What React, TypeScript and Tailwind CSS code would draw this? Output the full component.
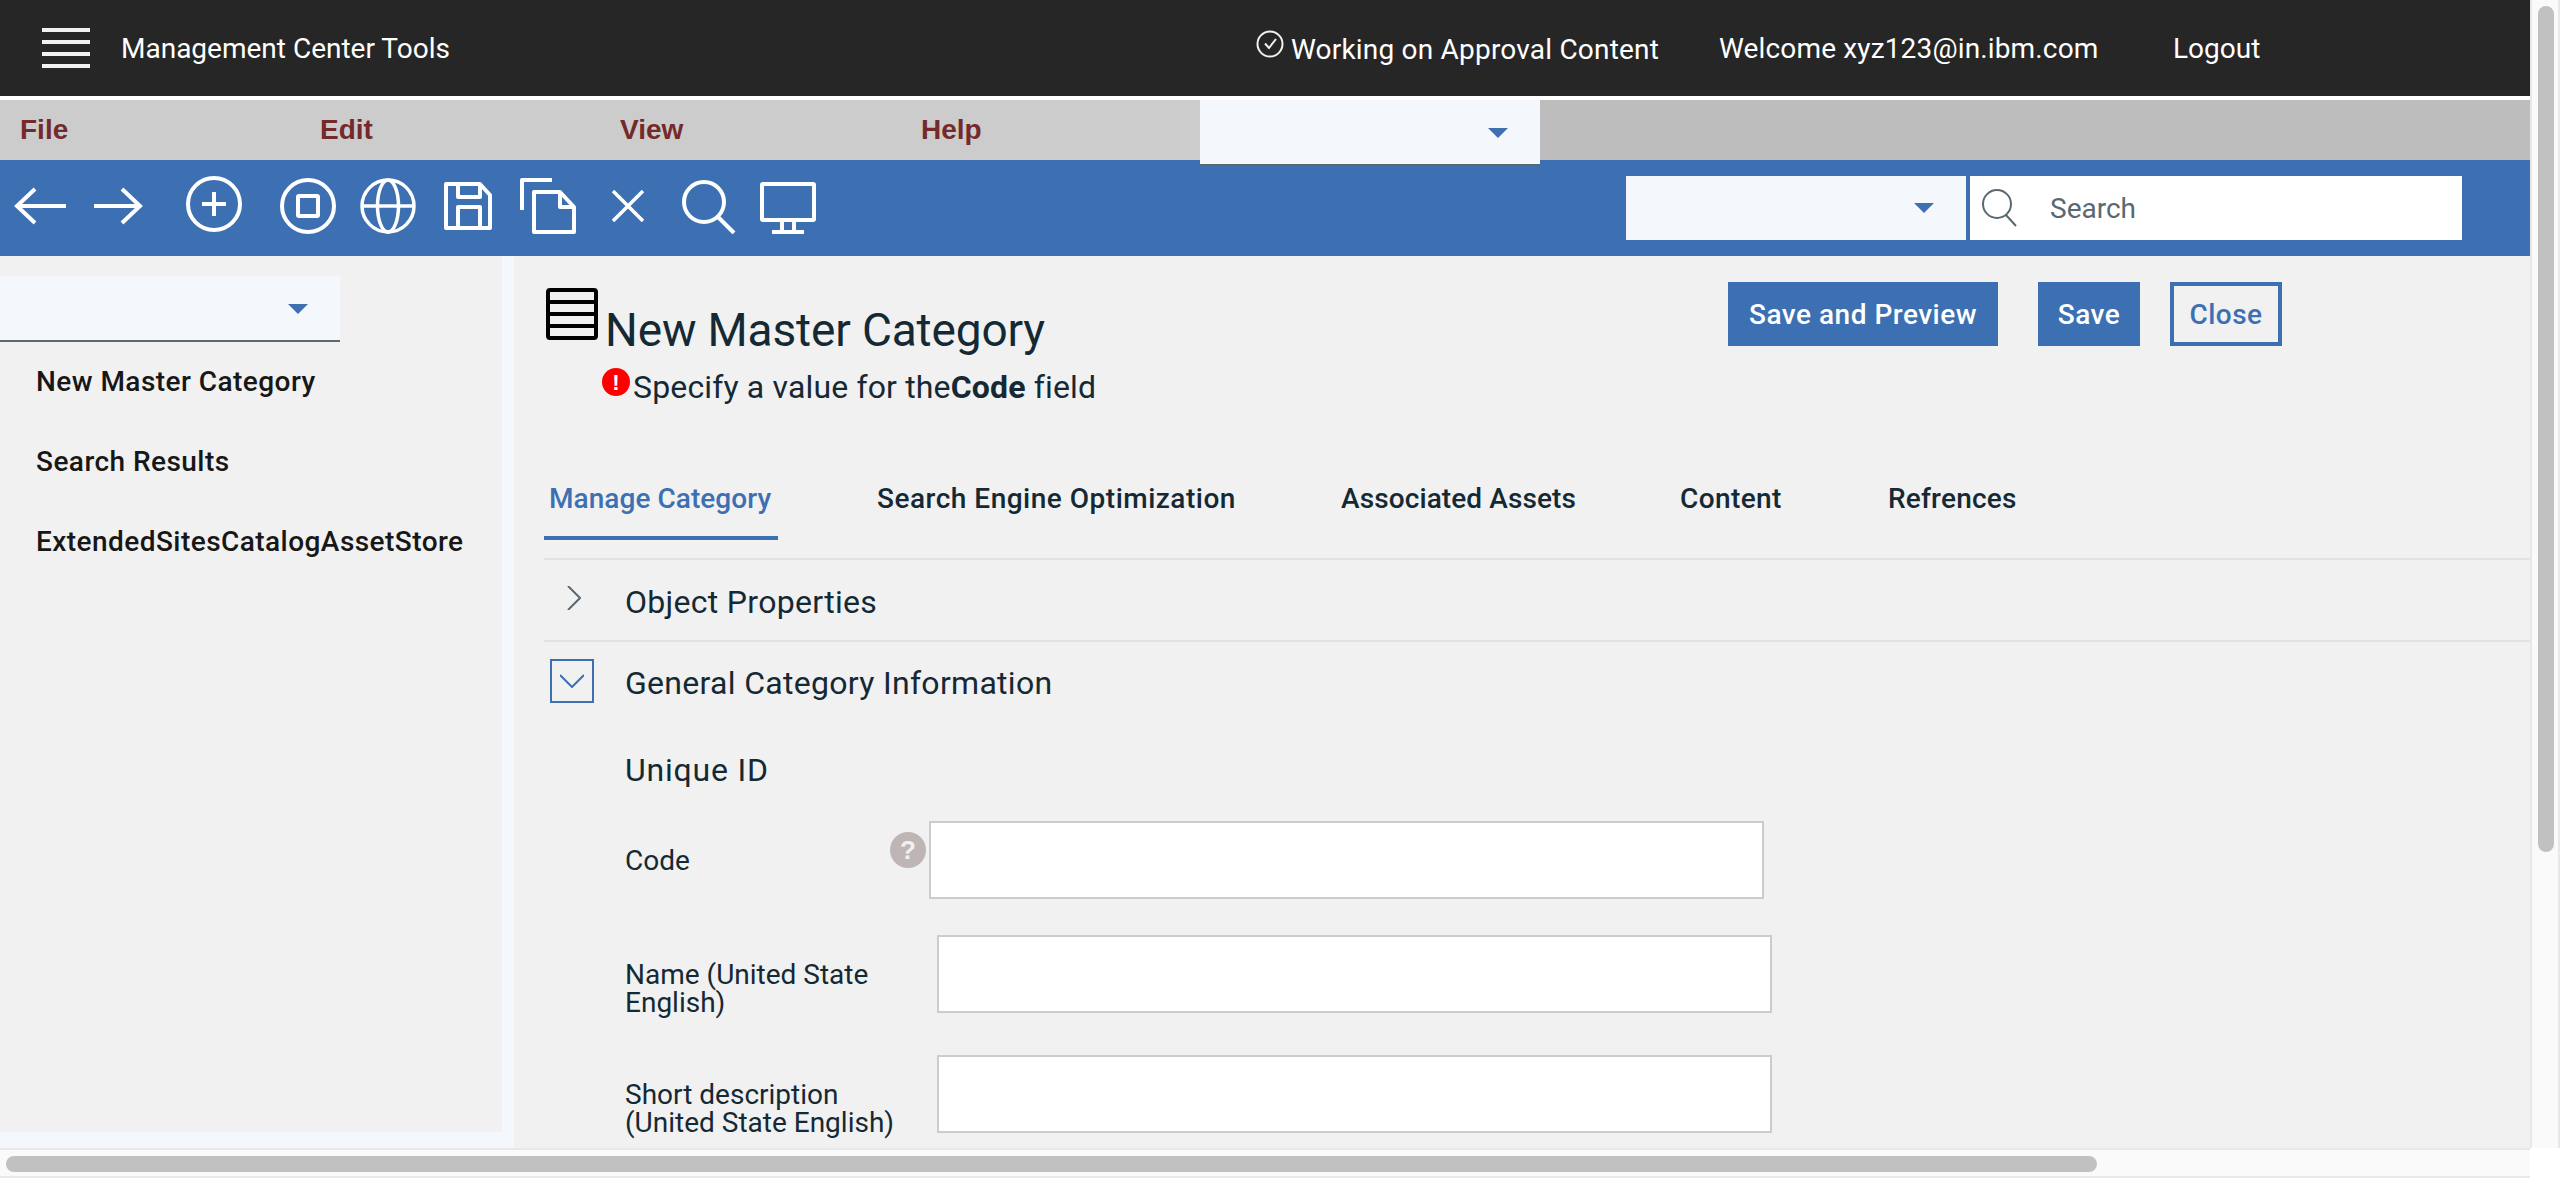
import React from 'react';

const Triangle = ({ className = '' }: { className?: string }) => (
  <svg width="20" height="10" viewBox="0 0 20 10" className={className}>
    <path d="M0 0h20L10 10z" fill="#3d70b2" />
  </svg>
);

const Toolbar = () => (
  <div className="flex items-start h-24 pl-[14px]">
    {/* back */}
    <svg width="52" height="40" viewBox="0 0 52 40" fill="none" stroke="white" strokeWidth="4" className="mt-[26px]">
      <path d="M21 3 3 20l18 17M3 20h49" />
    </svg>
    {/* forward */}
    <svg width="50" height="40" viewBox="0 0 50 40" fill="none" stroke="white" strokeWidth="4" className="ml-[28px] mt-[26px]">
      <path d="M28 3l18 17-18 17M46 20H0" />
    </svg>
    {/* add */}
    <svg width="56" height="56" viewBox="0 0 56 56" fill="none" stroke="white" strokeWidth="4" className="ml-[42px] mt-4">
      <circle cx="28" cy="28" r="26" />
      <path d="M28 16v24M16 28h24" />
    </svg>
    {/* stop */}
    <svg width="56" height="56" viewBox="0 0 56 56" fill="none" stroke="white" strokeWidth="4" className="ml-[38px] mt-[18px]">
      <circle cx="28" cy="28" r="26" />
      <rect x="18" y="18" width="20" height="20" rx="1" />
    </svg>
    {/* globe */}
    <svg width="56" height="56" viewBox="0 0 56 56" fill="none" stroke="white" strokeWidth="3.5" className="ml-6 mt-[18px]">
      <circle cx="28" cy="28" r="26" />
      <ellipse cx="28" cy="28" rx="10.5" ry="26" />
      <path d="M2 28h52" />
    </svg>
    {/* save */}
    <svg width="48" height="48" viewBox="0 0 48 48" fill="none" stroke="white" strokeWidth="4" strokeLinejoin="round" className="ml-7 mt-[22px]">
      <path d="M2 2h34l10 11v33H2z" />
      <path d="M14 2v13h22V2M14 46V25h22v21" />
    </svg>
    {/* copy */}
    <svg width="56" height="56" viewBox="0 0 56 56" fill="none" stroke="white" strokeWidth="4" strokeLinejoin="round" className="ml-7 mt-[18px]">
      <path d="M2 32V2h30" />
      <path d="M14 14h26l14 15v25H14z" />
      <path d="M40 14v15h14" />
    </svg>
    {/* delete */}
    <svg width="32" height="32" viewBox="0 0 32 32" fill="none" stroke="white" strokeWidth="3.5" className="ml-9 mt-[30px]">
      <path d="M1 1l30 30M31 1 1 31" />
    </svg>
    {/* find */}
    <svg width="54" height="54" viewBox="0 0 54 54" fill="none" stroke="white" strokeWidth="4" className="ml-[38px] mt-5">
      <circle cx="22" cy="22" r="20" />
      <path d="M36 37l16 16" />
    </svg>
    {/* monitor */}
    <svg width="56" height="52" viewBox="0 0 56 52" fill="none" stroke="white" strokeWidth="4" strokeLinejoin="round" className="ml-6 mt-[22px]">
      <rect x="2" y="2" width="52" height="36" rx="1" />
      <path d="M22 38v12M34 38v12M12 50h32" />
    </svg>
  </div>
);

const tabs = [
  { label: 'Search Engine Optimization', width: 'w-[464px] tracking-[0.5px]' },
  { label: 'Associated Assets', width: 'w-[339px] tracking-[0.1px]' },
  { label: 'Content', width: 'w-[208px] tracking-[0.4px]' },
  { label: 'Refrences', width: 'tracking-[0.2px]' },
];

const inputBox = 'w-[835px] h-[78px] bg-white border-2 border-[#cccccc] shrink-0';

export default function App() {
  return (
    <div className="flex flex-col w-[2560px] h-[1178px] overflow-hidden bg-white font-['Roboto',sans-serif]">
      <div className="flex h-[1148px]">
        <div className="w-[2530px] flex flex-col">
          <header className="h-24 bg-[#262626] text-white flex items-center text-[28px] shrink-0">
            <div className="ml-[42px] w-12 flex flex-col gap-2">
              <div className="h-1 bg-[#f1f1f1]" />
              <div className="h-1 bg-[#f1f1f1]" />
              <div className="h-1 bg-[#f1f1f1]" />
              <div className="h-1 bg-[#f1f1f1]" />
            </div>
            <span className="ml-[31px] mt-[2px] w-[327px] whitespace-nowrap">Management Center Tools</span>
            <svg width="28" height="28" viewBox="0 0 28 28" fill="none" stroke="#f1f1f1" strokeWidth="2" className="ml-[808px] -mt-[8px]">
              <circle cx="14" cy="14" r="12.5" />
              <path d="M9 13.5l4 4.5L20 9" />
            </svg>
            <span className="ml-[7px] mt-1 w-[368px] whitespace-nowrap tracking-[0.2px]">Working on Approval Content</span>
            <span className="ml-[60px] mt-[2px] w-[379px] whitespace-nowrap tracking-[0.15px]">Welcome xyz123@in.ibm.com</span>
            <span className="ml-[75px] mt-[2px]">Logout</span>
          </header>

          <div className="h-[60px] mt-1 shrink-0 flex bg-[#bdbdbd] relative">
            <div className="w-[1200px] bg-[#cccccc] flex font-['Liberation_Sans',sans-serif] font-bold text-[28px] text-[#742a2a] items-center pl-5">
              <span className="w-[300px]">File</span>
              <span className="w-[300px]">Edit</span>
              <span className="w-[301px]">View</span>
              <span>Help</span>
            </div>
            <div className="absolute left-[1200px] top-0 w-[340px] h-[66px] z-10 bg-[#f4f7fb] border-b-2 border-[#5a6872] flex items-center justify-end pr-8">
              <Triangle className="mt-[2px]" />
            </div>
          </div>

          <div className="h-24 bg-[#3d70b2] shrink-0 flex justify-between">
            <Toolbar />
            <div className="flex items-center mr-[68px]">
              <div className="w-[340px] h-16 bg-[#f4f7fb] flex items-center justify-end pr-8">
                <Triangle />
              </div>
              <div className="w-[492px] h-16 ml-1 bg-white flex items-center">
                <svg width="38" height="38" viewBox="0 0 38 38" fill="none" stroke="#5a6872" strokeWidth="2" className="ml-[10px]">
                  <circle cx="17" cy="15" r="14" />
                  <path d="M26 26l10 11" />
                </svg>
                <span className="ml-[32px] mt-[2px] text-[28px] text-[#5a6872]">Search</span>
              </div>
            </div>
          </div>

          <div className="flex-1 flex bg-[#f1f1f1] min-h-0">
            <aside className="w-[514px] shrink-0 border-r-[12px] border-b-[16px] border-[#f4f7fb] pt-5">
              <div className="w-[340px] h-[66px] bg-[#f4f7fb] border-b-2 border-[#5a6872] flex items-center justify-end pr-8">
                <Triangle className="mt-[2px]" />
              </div>
              <nav className="pl-9 text-[28px] font-medium text-[#171717] tracking-[0.45px]">
                <div className="h-20 flex items-center">New Master Category</div>
                <div className="h-20 flex items-center">Search Results</div>
                <div className="h-20 flex items-center">ExtendedSitesCatalogAssetStore</div>
              </nav>
            </aside>

            <main className="flex-1 pl-[30px] text-[#152934] min-w-0">
              <div className="flex h-[224px]">
                <div className="w-[1184px] flex flex-col">
                  <div className="flex mt-8 h-20">
                    <svg width="52" height="52" viewBox="0 0 52 52" fill="none" stroke="black" strokeWidth="4" className="ml-[2px] shrink-0">
                      <rect x="2" y="2" width="48" height="48" rx="2" />
                      <path d="M2 14h48M2 26h48M2 38h48" />
                    </svg>
                    <h1 className="ml-[7px] mt-[14px] text-[46px] leading-[56px] font-normal tracking-[-0.15px]">New Master Category</h1>
                  </div>
                  <div className="flex ml-[58px]">
                    <div className="w-7 h-7 rounded-full bg-[#ff0000] text-white text-[22px] font-bold flex items-center justify-center font-['Liberation_Sans',sans-serif]">!</div>
                    <p className="ml-[3px] text-[32px] leading-[38px] tracking-[0.15px]">
                      Specify a value for the<b className="font-bold">Code</b> field
                    </p>
                  </div>
                </div>
                <div className="flex mt-[26px] h-16 text-[28px] font-medium tracking-[0.5px]">
                  <button className="w-[270px] pt-[2px] bg-[#3d70b2] text-white">Save and Preview</button>
                  <button className="w-[102px] ml-[40px] pt-[2px] bg-[#3d70b2] text-white">Save</button>
                  <button className="w-[112px] ml-[30px] pt-[2px] border-4 border-[#3d70b2] text-[#3d70b2]">Close</button>
                </div>
              </div>

              <div className="flex text-[28px] leading-[38px] font-medium">
                <div className="w-[234px] pl-[5px] pb-[18px] border-b-4 border-[#3d70b2] text-[#3d70b2] whitespace-nowrap tracking-[0.05px]">
                  Manage Category
                </div>
                <div className="ml-[99px] flex">
                  {tabs.map((tab) => (
                    <div key={tab.label} className={`${tab.width} whitespace-nowrap`}>
                      {tab.label}
                    </div>
                  ))}
                </div>
              </div>

              <div className="mt-[18px] border-t-2 border-[#dfe3e6] h-[82px] flex items-center text-[32px] tracking-[0.3px]">
                <svg width="14" height="24" viewBox="0 0 14 24" fill="none" stroke="#5a6872" strokeWidth="2" className="ml-[23px] mt-[-4px]">
                  <path d="M1 0l12 12L1 24" />
                </svg>
                <span className="ml-[44px] mt-[3px]">Object Properties</span>
              </div>

              <div className="border-t-2 border-[#dfe3e6] h-20 flex items-center text-[32px] tracking-[0.3px]">
                <div className="ml-[6px] w-11 h-11 border-2 border-[#3d70b2] flex items-center justify-center">
                  <svg width="24" height="14" viewBox="0 0 24 14" fill="none" stroke="#3d70b2" strokeWidth="2">
                    <path d="M0 1l12 12L24 1" />
                  </svg>
                </div>
                <span className="ml-[31px] mt-[3px]">General Category Information</span>
              </div>

              <div className="pl-[81px]">
                <div className="mt-[31px] mb-[-1px] text-[32px] leading-[38px] tracking-[0.8px]">Unique ID</div>

                <div className="mt-[33px] flex items-start text-[28px] leading-[28px]">
                  <div className="w-[265px] mt-[26px]">Code</div>
                  <div className="w-9 h-9 mt-[11px] rounded-full bg-[#bfb5b5] text-[#f1f1f1] text-[26px] font-bold flex items-center justify-center font-['Liberation_Sans',sans-serif]">
                    ?
                  </div>
                  <div className={`ml-[3px] ${inputBox}`} />
                </div>

                <div className="mt-9 flex items-start text-[28px] leading-[28px]">
                  <div className="w-[312px] mt-[26px]">
                    Name (United State
                    <br />
                    English)
                  </div>
                  <div className={inputBox} />
                </div>

                <div className="mt-[38px] flex items-start text-[28px] leading-[28px]">
                  <div className="w-[312px] mt-[26px]">
                    Short description
                    <br />
                    (United State English)
                  </div>
                  <div className={inputBox} />
                </div>
              </div>
            </main>
          </div>
        </div>

        <div className="w-[30px] bg-[#fafafa] border-l-2 border-r-2 border-[#e8e8e8] pt-[6px] pl-[6px]">
          <div className="w-4 h-[846px] rounded-full bg-[#c1c1c1]" />
        </div>
      </div>

      <div className="flex h-[30px]">
        <div className="w-[2530px] bg-[#fafafa] border-y-2 border-[#e8e8e8] pt-[6px] pl-[6px]">
          <div className="w-[2091px] h-4 rounded-full bg-[#c1c1c1]" />
        </div>
      </div>
    </div>
  );
}
